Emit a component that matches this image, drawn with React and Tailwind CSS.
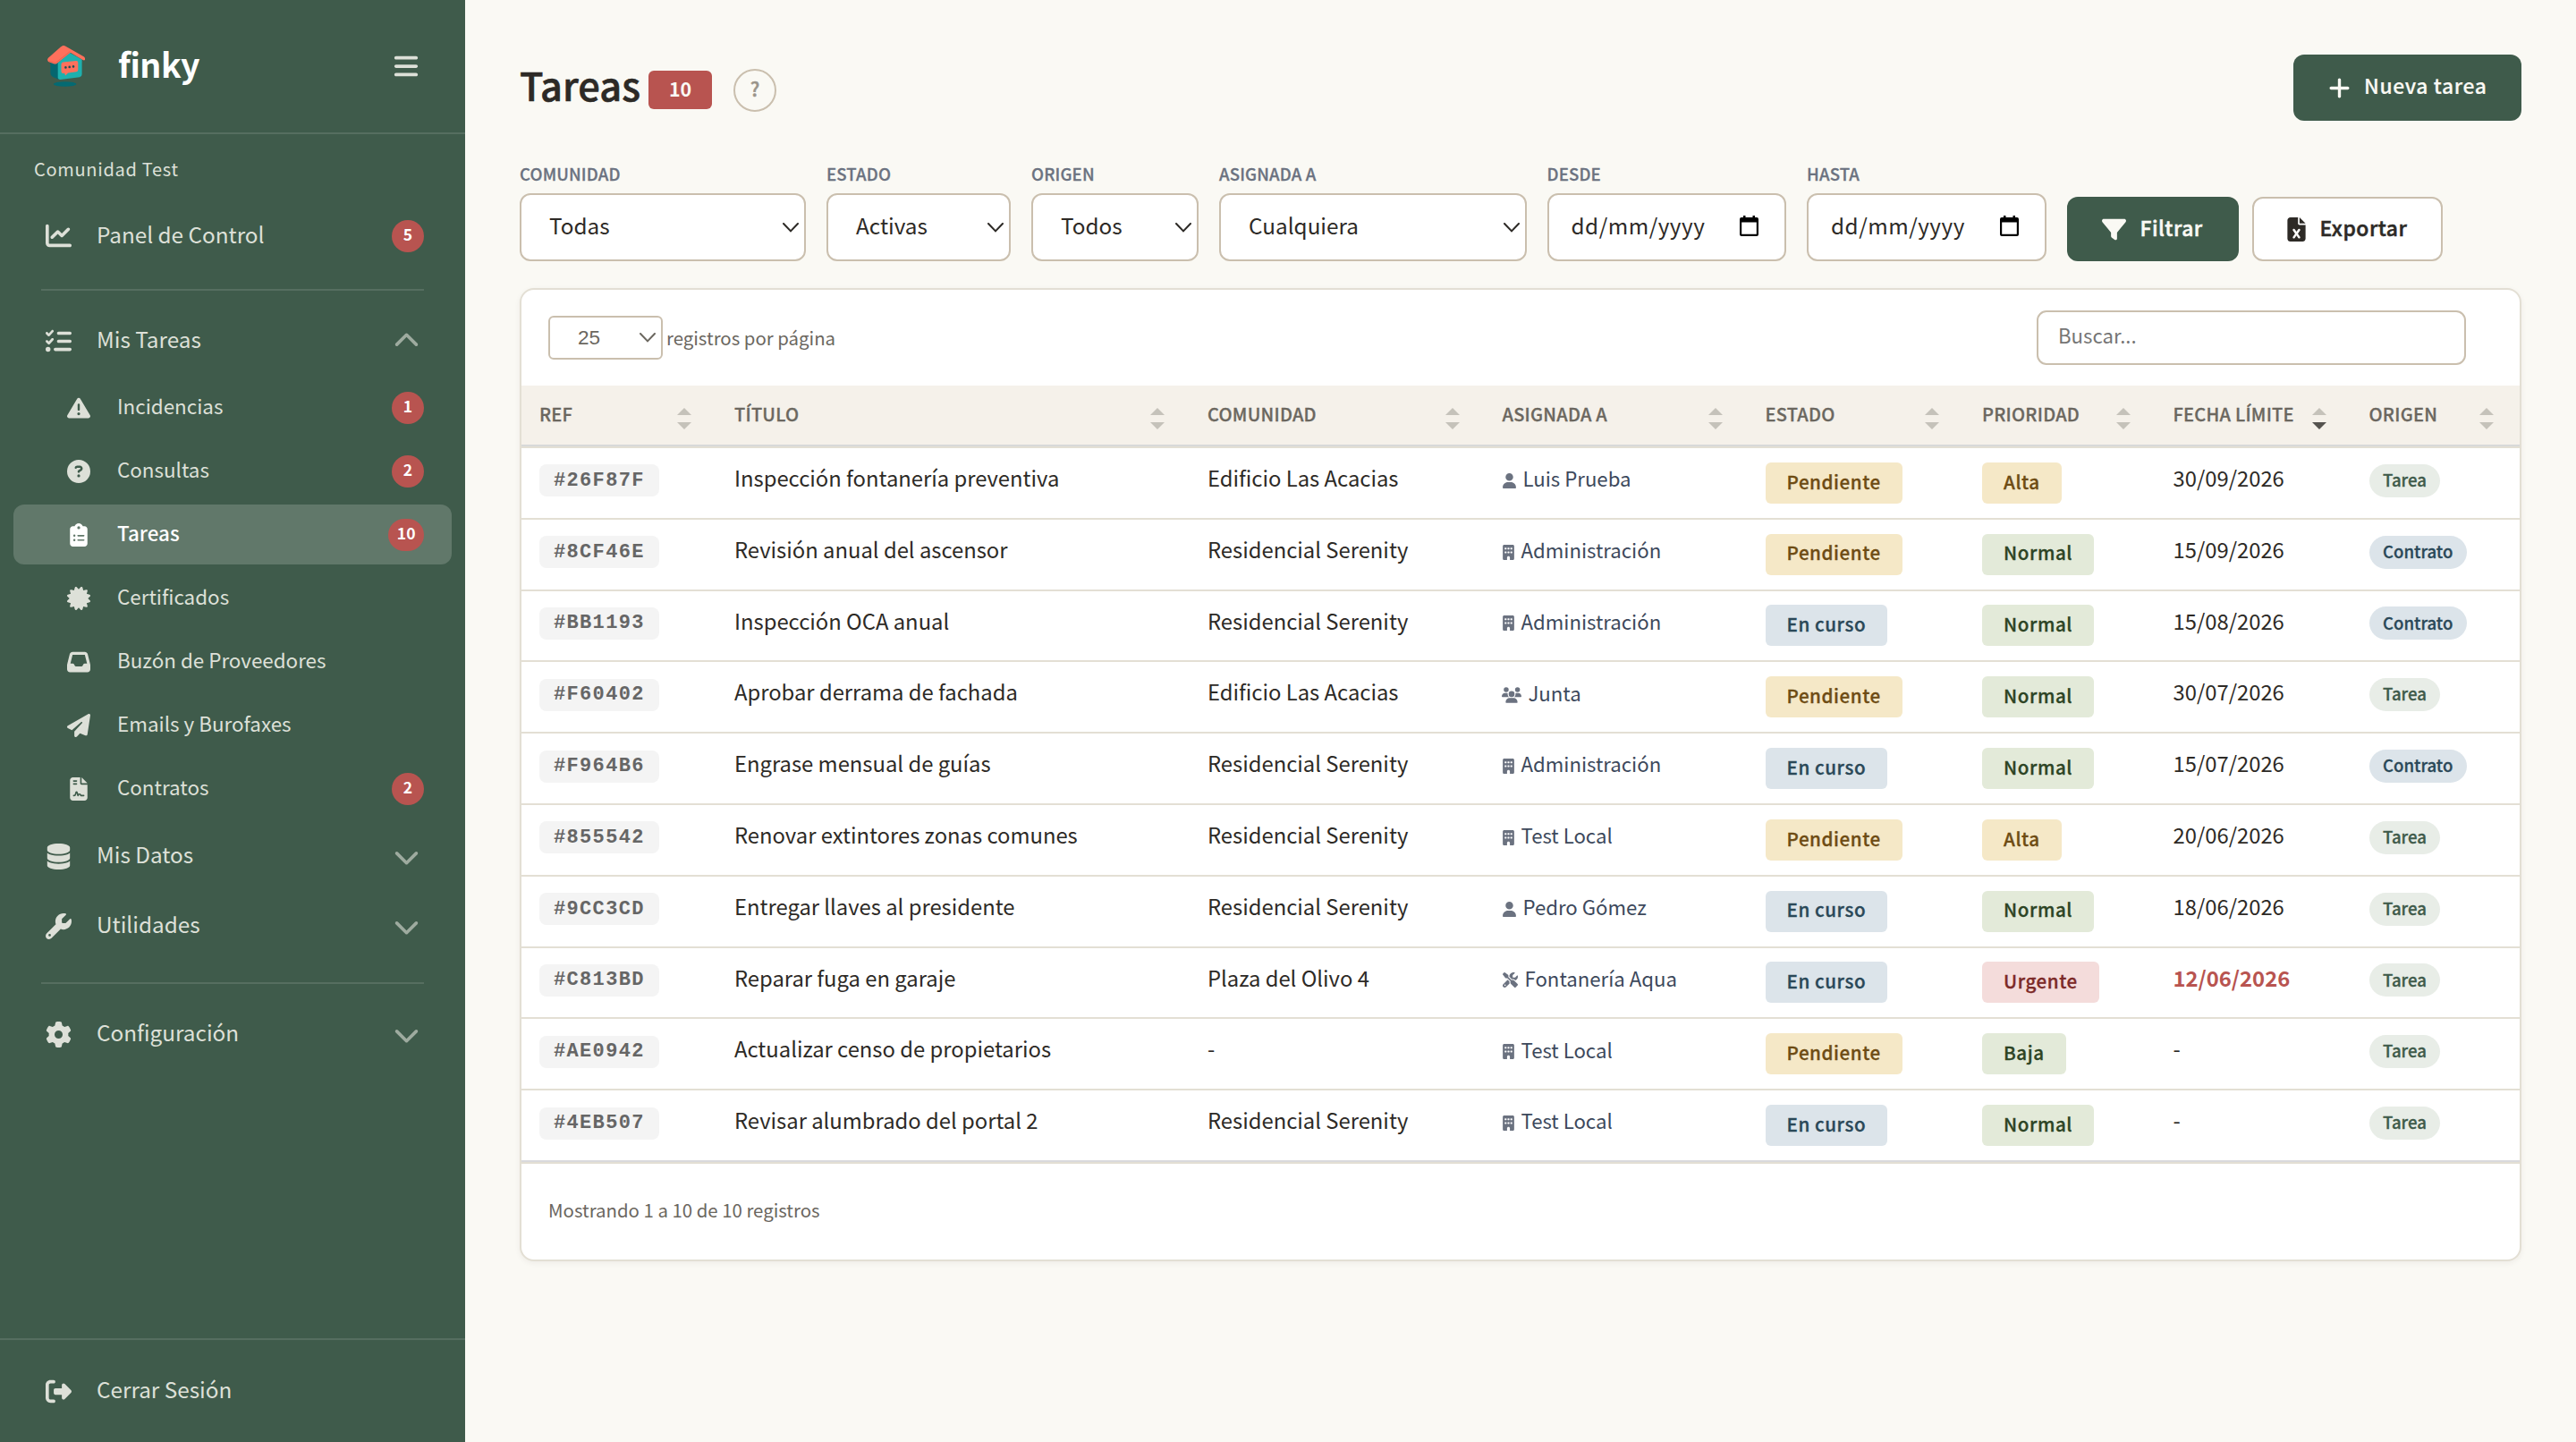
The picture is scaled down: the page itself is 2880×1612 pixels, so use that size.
import React from "react";
import clsx from "clsx";
import {
  FaBars,
  FaBuilding,
  FaCertificate,
  FaChartLine,
  FaChevronDown,
  FaChevronUp,
  FaCircleQuestion,
  FaClipboardList,
  FaDatabase,
  FaFileContract,
  FaFileExcel,
  FaFilter,
  FaGear,
  FaInbox,
  FaListCheck,
  FaPaperPlane,
  FaPlus,
  FaRightFromBracket,
  FaScrewdriverWrench,
  FaTriangleExclamation,
  FaUser,
  FaUsers,
  FaWrench,
} from "react-icons/fa6";

const subItems = [
  { label: "Incidencias", icon: FaTriangleExclamation, badge: 1 },
  { label: "Consultas", icon: FaCircleQuestion, badge: 2 },
  { label: "Tareas", icon: FaClipboardList, badge: 10, active: true },
  { label: "Certificados", icon: FaCertificate },
  { label: "Buzón de Proveedores", icon: FaInbox },
  { label: "Emails y Burofaxes", icon: FaPaperPlane },
  { label: "Contratos", icon: FaFileContract, badge: 2 },
];

const columns = ["Ref", "Título", "Comunidad", "Asignada a", "Estado", "Prioridad", "Fecha límite", "Origen"];

const gridCols = "grid grid-cols-[218px_529px_329.5px_294px_242.5px_213.5px_219px_187.5px]";

const tasks = [
  { ref: "#26F87F", title: "Inspección fontanería preventiva", community: "Edificio Las Acacias", type: "user", assignee: "Luis Prueba", status: "Pendiente", priority: "Alta", due: "30/09/2026", origin: "Tarea" },
  { ref: "#8CF46E", title: "Revisión anual del ascensor", community: "Residencial Serenity", type: "office", assignee: "Administración", status: "Pendiente", priority: "Normal", due: "15/09/2026", origin: "Contrato" },
  { ref: "#BB1193", title: "Inspección OCA anual", community: "Residencial Serenity", type: "office", assignee: "Administración", status: "En curso", priority: "Normal", due: "15/08/2026", origin: "Contrato" },
  { ref: "#F60402", title: "Aprobar derrama de fachada", community: "Edificio Las Acacias", type: "board", assignee: "Junta", status: "Pendiente", priority: "Normal", due: "30/07/2026", origin: "Tarea" },
  { ref: "#F964B6", title: "Engrase mensual de guías", community: "Residencial Serenity", type: "office", assignee: "Administración", status: "En curso", priority: "Normal", due: "15/07/2026", origin: "Contrato" },
  { ref: "#855542", title: "Renovar extintores zonas comunes", community: "Residencial Serenity", type: "office", assignee: "Test Local", status: "Pendiente", priority: "Alta", due: "20/06/2026", origin: "Tarea" },
  { ref: "#9CC3CD", title: "Entregar llaves al presidente", community: "Residencial Serenity", type: "user", assignee: "Pedro Gómez", status: "En curso", priority: "Normal", due: "18/06/2026", origin: "Tarea" },
  { ref: "#C813BD", title: "Reparar fuga en garaje", community: "Plaza del Olivo 4", type: "provider", assignee: "Fontanería Aqua", status: "En curso", priority: "Urgente", due: "12/06/2026", overdue: true, origin: "Tarea" },
  { ref: "#AE0942", title: "Actualizar censo de propietarios", community: "-", type: "office", assignee: "Test Local", status: "Pendiente", priority: "Baja", due: "-", origin: "Tarea" },
  { ref: "#4EB507", title: "Revisar alumbrado del portal 2", community: "Residencial Serenity", type: "office", assignee: "Test Local", status: "En curso", priority: "Normal", due: "-", origin: "Tarea" },
];

const pillColors = {
  Pendiente: "bg-[#f5e8c7] text-[#6e4c14]",
  "En curso": "bg-[#dce4ea] text-[#2a4858]",
  Alta: "bg-[#f5e8c7] text-[#6e4c14]",
  Normal: "bg-[#e3ead9] text-[#2d4424]",
  Baja: "bg-[#e3ead9] text-[#2d4424]",
  Urgente: "bg-[#f4dcdb] text-[#7c2a28]",
};

// icon, the width it takes in the "Asignada a" column and its own size
const assigneeIcons = {
  user: { icon: FaUser, box: "w-[15px]", size: "size-[17px]" },
  office: { icon: FaBuilding, box: "w-[13px]", size: "size-[17px]" },
  board: { icon: FaUsers, box: "w-[21px]", size: "size-[22px]" },
  provider: { icon: FaScrewdriverWrench, box: "w-[17px]", size: "size-[17px]" },
};

function Logo() {
  return (
    <svg viewBox="0 0 42 46" className="h-[46px] w-[42px]">
      <ellipse cx="19.6" cy="43" rx="12.7" ry="2.8" fill="#046a72" />
      <path d="M3.4 17 L12 19 L12.6 37.8 L6 35 Q3.4 33.5 3.4 31 Z" fill="#05666f" />
      <path d="M25.1 8 L38.6 15.5 V32 Q38.6 34.8 36 35.3 L14.5 37.9 Q11.7 38 11.7 35.5 V19 Z" fill="#1fb0ae" />
      <path d="M17.2 0 Q18.5 -0.3 20 .6 L41 12.6 Q42.4 13.8 42 15.8 Q41.2 17 39.6 16 L25.8 7.8 L10.5 20 Q9.3 20.9 7.6 20.5 L1.6 18.3 Q-0.3 17 .2 14.9 Q.6 13.8 2.4 12.4 L14.8 1.4 Z" fill="#ff705c" />
      <path d="M2 17.4 L9 19.4 L25.4 6.4" fill="none" stroke="#e5604d" strokeWidth="0.8" />
      <path d="M17.6 18.6 L32.2 17.1 Q34.3 17 34.3 19 V27 Q34.3 29 32.3 29.3 L23.2 30.5 L20 33.6 L19.3 31 L17.6 31 Q15.5 31 15.5 29 V21 Q15.5 19 17.6 18.6 Z" fill="#ff705c" />
      <circle cx="20.4" cy="24.4" r="1.3" fill="#1d4f55" />
      <circle cx="24.7" cy="23.9" r="1.3" fill="#1d4f55" />
      <circle cx="29" cy="23.4" r="1.3" fill="#1d4f55" />
    </svg>
  );
}

function Badge({ children }) {
  return (
    <span className="ml-auto flex h-9 min-w-9 items-center justify-center rounded-full bg-[#b85450] px-[9.5px] pb-1 text-[17.5px] font-bold text-white">
      {children}
    </span>
  );
}

function NavItem({ icon: Icon, label, badge, chevron }) {
  return (
    <div className="flex h-[74px] items-center pl-[51px] pr-[46px]">
      <Icon className="size-[29px]" />
      <span className="ml-[28px] pb-[3px] text-[24.3px]">{label}</span>
      {badge && <Badge>{badge}</Badge>}
      {chevron === "up" && <FaChevronUp className="ml-auto mr-[5px] size-[29px] opacity-60" />}
      {chevron === "down" && <FaChevronDown className="ml-auto mr-[5px] size-[29px] opacity-60" />}
    </div>
  );
}

function SubItem({ icon: Icon, label, badge, active }) {
  return (
    <div
      className={clsx(
        "mx-[15px] flex h-[67px] items-center rounded-xl pl-[60px] pr-[31px]",
        active && "bg-[#61786a] font-medium text-white"
      )}
    >
      <Icon className="size-[26px]" />
      <span className="ml-[30px] pb-[5px] text-[22.4px]">{label}</span>
      {badge && <Badge>{badge}</Badge>}
    </div>
  );
}

function Sidebar() {
  return (
    <aside className="flex h-full w-[520px] flex-col bg-[#3f5b4b] text-[#dde0d8]">
      <div className="flex h-[150px] items-center border-b-2 border-[#566e60] pl-[53px] pr-[51px]">
        <Logo />
        <span className="ml-[37px] pb-[7px] text-[37.5px] font-bold tracking-[-0.5px] text-white">finky</span>
        <FaBars className="ml-auto size-[30px]" />
      </div>

      <div className="flex h-[76.5px] items-center pl-[38px] pt-[2px] text-[20px] tracking-[0.7px]">Comunidad Test</div>
      <NavItem icon={FaChartLine} label="Panel de Control" badge={5} />
      <div className="mx-[46px] mb-[19px] mt-[22.5px] h-[2px] bg-[#566e60]" />
      <NavItem icon={FaListCheck} label="Mis Tareas" chevron="up" />
      <div className="mb-[5px] mt-1 flex flex-col gap-1">
        {subItems.map((item) => (
          <SubItem key={item.label} {...item} />
        ))}
      </div>
      <div className="flex flex-col gap-1">
        <NavItem icon={FaDatabase} label="Mis Datos" chevron="down" />
        <NavItem icon={FaWrench} label="Utilidades" chevron="down" />
      </div>
      <div className="mx-[46px] mb-[19px] mt-[26px] h-[2px] bg-[#566e60]" />
      <NavItem icon={FaGear} label="Configuración" chevron="down" />

      <div className="mt-auto flex h-[116px] flex-col justify-center border-t-2 border-[#566e60]">
        <NavItem icon={FaRightFromBracket} label="Cerrar Sesión" />
      </div>
    </aside>
  );
}

function SelectArrow() {
  return (
    <svg viewBox="0 0 18 11" className="h-[11px] w-[18px]" fill="none" stroke="currentColor" strokeWidth="2">
      <path d="M1 1 L9 9.4 L17 1" strokeLinecap="round" />
    </svg>
  );
}

function CalendarIcon() {
  return (
    <svg viewBox="0 0 21 23" className="h-[23px] w-[21px]">
      <path d="M4 0 H6.5 V2 H14.5 V0 H17 V2 H19 Q21 2 21 4 V21 Q21 23 19 23 H2 Q0 23 0 21 V4 Q0 2 2 2 H4 Z M2.2 7.6 V20.8 H18.8 V7.6 Z" fill="#000" fillRule="evenodd" />
    </svg>
  );
}

function Field({ label, children }) {
  return (
    <div>
      <div className="mb-[10px] h-6 text-[18.6px] font-medium uppercase leading-6 tracking-[0.15px] text-[#6b7280] [-webkit-text-stroke:0.3px]">
        {label}
      </div>
      {children}
    </div>
  );
}

function SelectField({ label, value, width }) {
  return (
    <Field label={label}>
      <div className={clsx("flex h-[76px] items-center justify-between rounded-xl border-2 border-[#cabfae] bg-white pl-[31px] pr-[6px]", width)}>
        <span className="pb-[3px] text-[24.3px]">{value}</span>
        <SelectArrow />
      </div>
    </Field>
  );
}

function DateField({ label }) {
  return (
    <Field label={label}>
      <div className="flex h-[76px] w-[267.5px] items-center justify-between rounded-xl border-2 border-[#cabfae] bg-white pl-[25px] pr-[29px]">
        <span className="pb-[3px] text-[24.3px] tracking-[0.5px]">dd/mm/yyyy</span>
        <span className="pb-[3px]">
          <CalendarIcon />
        </span>
      </div>
    </Field>
  );
}

function SortIcon({ active }) {
  return (
    <svg viewBox="0 0 16 24" className="mt-2 h-6 w-4">
      <path d="M8 0 L16 8 H0 Z" fill="#c5c2ba" />
      <path d="M0 16 H16 L8 24 Z" fill={active ? "#55534f" : "#c5c2ba"} />
    </svg>
  );
}

function Pill({ children }) {
  return (
    <span
      className={clsx(
        "flex h-[46px] items-center rounded-md px-6 pb-1 text-[20.6px] font-medium tracking-[0.57px] [-webkit-text-stroke:0.3px]",
        pillColors[children]
      )}
    >
      {children}
    </span>
  );
}

function TaskRow({ task, last }) {
  const { icon: Icon, box, size } = assigneeIcons[task.type];
  return (
    <div
      className={clsx(
        gridCols,
        "h-[79.8px] border-b-2 text-[23.8px] *:flex *:items-center *:pl-5",
        last ? "border-[#d9d9dc]" : "border-[#e3dfd4]"
      )}
    >
      <div className="pb-[5px]">
        <span className="flex h-9 items-center rounded-lg bg-[#f4f4f4] px-4 pt-px font-['Liberation_Mono',monospace] text-[22px] font-bold tracking-[1.33px] text-[#666]">
          {task.ref}
        </span>
      </div>
      <div className="pb-3">{task.title}</div>
      <div className="pb-3">{task.community}</div>
      <div className="text-[22.2px] text-[#3d495c]">
        <span className={clsx("mb-[5px] flex justify-center text-[#6b7280]", box)}>
          <Icon className={clsx("shrink-0", size)} />
        </span>
        <span className="ml-2 pb-[11px]">{task.assignee}</span>
      </div>
      <div>
        <Pill>{task.status}</Pill>
      </div>
      <div>
        <Pill>{task.priority}</Pill>
      </div>
      <div className={clsx("pb-3", task.overdue && "font-bold text-[#b85450]")}>{task.due}</div>
      <div className="pb-[5px]">
        <span
          className={clsx(
            "flex h-[37px] items-center rounded-full px-[15.5px] pb-[2px] text-[18.6px] font-medium [-webkit-text-stroke:0.3px]",
            task.origin === "Tarea" ? "bg-[#e8ede7] text-[#3f5b4b]" : "bg-[#dce4ea] text-[#2a4858]"
          )}
        >
          {task.origin}
        </span>
      </div>
    </div>
  );
}

export default function App() {
  return (
    <div className="flex h-[1612px] w-[2880px] whitespace-nowrap bg-[#faf9f4] font-['Noto_Sans_CJK_SC',sans-serif] leading-none text-[#2d2a26]">
      <Sidebar />

      <main className="flex-1 pl-[61px] pr-[61px] pt-[61px]">
        <div className="flex h-[74px] items-center">
          <h1 className="w-36 pb-[7px] text-[43.4px] font-medium [-webkit-text-stroke:0.6px]">Tareas</h1>
          <span className="mt-[5px] flex h-[43px] w-[71px] items-center justify-center rounded-md bg-[#b85450] pb-[3px] text-[21.4px] font-bold text-[#faf9f4]">
            10
          </span>
          <span className="ml-6 mt-[6px] flex size-12 items-center justify-center rounded-full border-2 border-[#cabfae] pb-1 text-[21.4px] font-medium text-[#9a948a] [-webkit-text-stroke:0.5px]">
            ?
          </span>
          <button className="ml-auto flex h-[74px] w-[255px] items-center rounded-xl bg-[#3f5b4b] pl-[38px] text-[#faf9f4]">
            <FaPlus className="size-[27px]" />
            <span className="ml-[14px] pb-[6px] text-[22.9px] font-medium tracking-[0.6px] [-webkit-text-stroke:0.2px]">Nueva tarea</span>
          </button>
        </div>

        <div className="mt-[47px] flex items-end gap-[23px]">
          <SelectField label="Comunidad" value="Todas" width="w-[320px]" />
          <SelectField label="Estado" value="Activas" width="w-[206px]" />
          <SelectField label="Origen" value="Todos" width="w-[187px]" />
          <SelectField label="Asignada a" value="Cualquiera" width="w-[343.5px]" />
          <DateField label="Desde" />
          <DateField label="Hasta" />
          <div className="flex gap-[15px] text-[22.9px] font-medium tracking-[0.5px] [-webkit-text-stroke:0.5px]">
            <button className="flex h-[72px] w-48 items-center rounded-xl bg-[#3f5b4b] pl-[39px] text-[#faf9f4]">
              <FaFilter className="size-[27px]" />
              <span className="ml-4 pb-1">Filtrar</span>
            </button>
            <button className="flex h-[72px] w-[213px] items-center rounded-xl border-2 border-[#cabfae] bg-white pl-[34px]">
              <FaFileExcel className="size-[27px]" />
              <span className="ml-[13px] pb-1">Exportar</span>
            </button>
          </div>
        </div>

        <section className="mt-[30px] flex h-[1088px] flex-col rounded-2xl border-2 border-[#e3dfd4] bg-white shadow-[0_2px_6px_rgba(45,42,38,0.06)]">
          <div className="flex h-[107px] items-center pl-[30px] pr-[60px] text-[20.4px] text-[#6b675f]">
            <div className="flex h-[49px] w-32 items-center justify-between rounded-md border-2 border-[#cabfae] pl-[31px] pr-[6px] font-['Liberation_Sans',sans-serif] text-[22.6px]">
              <span className="pt-px">25</span>
              <SelectArrow />
            </div>
            <span className="ml-1">registros por página</span>
            <div className="ml-auto flex h-[61px] w-[480px] items-center rounded-[11px] border-2 border-[#cabfae] pb-[6px] pl-[22px] text-[22.2px] text-[#757575]">
              Buscar...
            </div>
          </div>

          <div className={clsx(gridCols, "h-[68px] border-b-2 border-[#d8d9d9] bg-[#f5f1ea]")}>
            {columns.map((name) => (
              <div key={name} className="flex items-center justify-between pl-5 pr-7">
                <span className="pb-[3px] text-[20px] font-medium uppercase tracking-[0.25px] text-[#6b675f] [-webkit-text-stroke:0.3px]">
                  {name}
                </span>
                <SortIcon active={name === "Fecha límite"} />
              </div>
            ))}
          </div>
          <div className="border-y-2 border-[#e3dfd4]">
            {tasks.map((task, i) => (
              <TaskRow key={task.ref} task={task} last={i === tasks.length - 1} />
            ))}
          </div>

          <div className="flex flex-1 items-center pb-1 pl-[30px] text-[20.4px] text-[#6b675f]">
            Mostrando 1 a 10 de 10 registros
          </div>
        </section>
      </main>
    </div>
  );
}
